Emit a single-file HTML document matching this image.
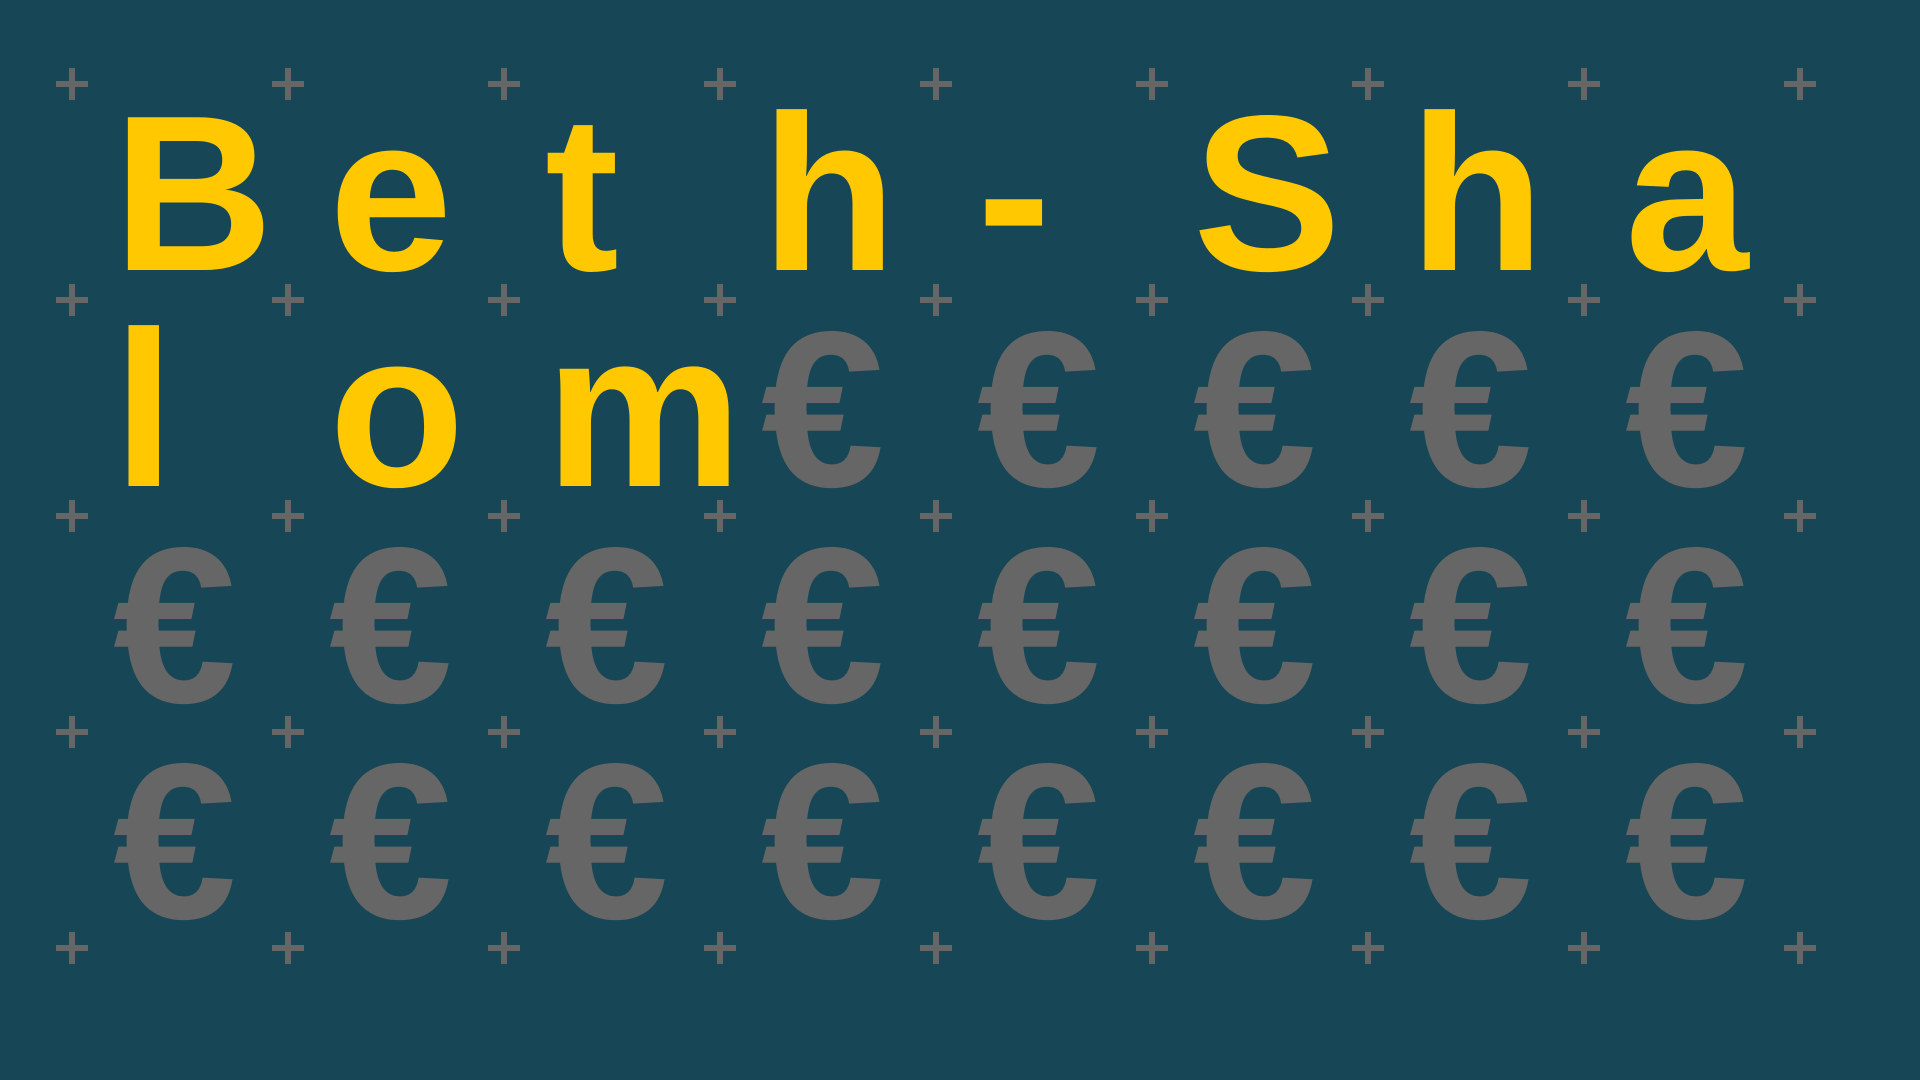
<!DOCTYPE html>
<html><head><meta charset="utf-8"><style>
html,body{margin:0;padding:0;width:1920px;height:1080px;overflow:hidden;background:#174756;}
.p{position:absolute;width:32px;height:32px;}
.p:before{content:"";position:absolute;left:0;top:13px;width:32px;height:6px;background:#666;}
.p:after{content:"";position:absolute;left:13px;top:0;width:6px;height:32px;background:#666;}
.g{position:absolute;left:72px;top:86px;width:1728px;display:flex;flex-wrap:wrap;}
.g span{width:216px;height:216px;line-height:216px;text-align:left;box-sizing:border-box;padding-left:41px;white-space:nowrap;overflow:visible;font-family:"Liberation Sans",sans-serif;font-weight:bold;font-size:222px;color:#666;}
.g span.y{color:#ffc800;}
</style></head><body>
<div class="g">
<span class="y">B</span><span class="y">e</span><span class="y">t</span><span class="y">h</span><span class="y">-</span><span class="y">S</span><span class="y">h</span><span class="y">a</span>
<span class="y">l</span><span class="y">o</span><span class="y">m</span><span>€</span><span>€</span><span>€</span><span>€</span><span>€</span>
<span>€</span><span>€</span><span>€</span><span>€</span><span>€</span><span>€</span><span>€</span><span>€</span>
<span>€</span><span>€</span><span>€</span><span>€</span><span>€</span><span>€</span><span>€</span><span>€</span>
</div>
<div id="pl"></div>
<script>
var h='';for(var r=0;r<5;r++)for(var c=0;c<9;c++){h+='<div class="p" style="left:'+(56+c*216)+'px;top:'+(68+r*216)+'px"></div>';}
document.getElementById('pl').innerHTML=h;
</script>
</body></html>
